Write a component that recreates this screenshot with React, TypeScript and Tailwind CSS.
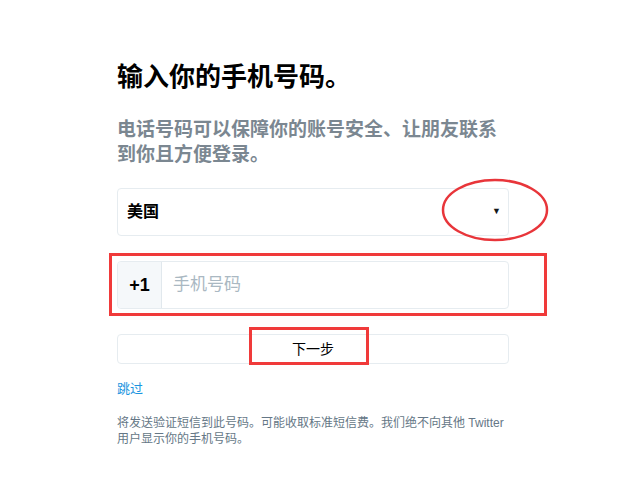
import React from 'react';

const cjk = { fontFamily: '"Liberation Sans", "Noto Sans CJK SC", sans-serif' };

export default function App() {
  return (
    <div className="relative min-h-[483px] w-[631px] bg-white text-[#14171a]" style={cjk}>
      <div className="w-[392px] ml-[117px] pt-[61px]">
        <h1 className="text-[26px] leading-[32px] font-bold text-black">输入你的手机号码。</h1>
        <p className="mt-[24px] text-[19px] leading-[25px] font-bold text-[#7b8791]">
          电话号码可以保障你的账号安全、让朋友联系到你且方便登录。
        </p>

        {/* country select */}
        <div className="mt-[21px] h-[48px] flex items-center justify-between border border-[#e6ecf0] rounded-[4px] pl-[9px] pr-[7px]">
          <span className="text-[16px] font-bold text-black">美国</span>
          <span className="text-[9px] text-[#14171a]">▼</span>
        </div>

        {/* phone */}
        <div className="mt-[25px] h-[48px] flex border border-[#e6ecf0] rounded-[4px] overflow-hidden">
          <div className="w-[44px] bg-[#f5f8fa] border-r border-[#e1e8ed] flex items-center justify-center text-[18px] font-bold text-black">
            +1
          </div>
          <div className="flex-1 flex items-center pl-[11px] text-[17px] text-[#aab8c2]">手机号码</div>
        </div>

        {/* next */}
        <div className="mt-[25px] h-[30px] flex items-center justify-center border border-[#e6ecf0] rounded-[4px] text-[14px] text-black">
          下一步
        </div>

        <div className="mt-[16px] text-[13px] leading-[18px] text-[#1b95e0]">跳过</div>

        <p className="mt-[17px] text-[12px] leading-[16px] text-[#657786]">
          将发送验证短信到此号码。可能收取标准短信费。我们绝不向其他 Twitter 用户显示你的手机号码。
        </p>
      </div>

      {/* red annotations */}
      <svg className="absolute left-[440px] top-[177px]" width="112" height="66" viewBox="0 0 112 66">
        <ellipse cx="55" cy="33" rx="52" ry="30" fill="none" stroke="#e8353a" strokeWidth="2.5" />
      </svg>
      <div className="absolute left-[109px] top-[253px] w-[438px] h-[63px] border-[3px] border-[#f03a3a]" />
      <div className="absolute left-[249px] top-[327px] w-[120px] h-[38px] border-[3px] border-[#f03a3a]" />
    </div>
  );
}
